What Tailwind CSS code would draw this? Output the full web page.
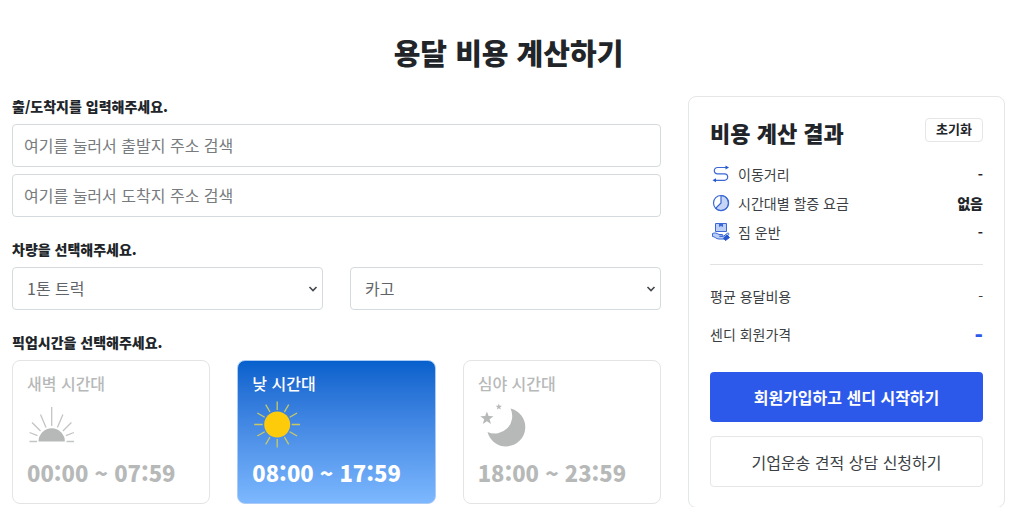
<!DOCTYPE html>
<html lang="ko">
  <head>
    <meta charset="utf-8" />
    <meta name="viewport" content="width=device-width, initial-scale=1" />
    <title>용달 비용 계산하기</title>
    <script src="https://cdn.jsdelivr.net/npm/@tailwindcss/browser@4"></script>
  </head>
  <body class="overflow-x-hidden bg-white font-['Noto_Sans_CJK_KR',sans-serif] text-[#212529]">
    <main class="pt-[30px] pr-[19px] pl-3">
      <h1 class="mb-[22px] text-center text-[29px] leading-[44px] font-black">용달 비용 계산하기</h1>

      <div class="grid items-start gap-[27px] md:grid-cols-[minmax(0,1fr)_317px]">
        <!-- Calculator form -->
        <form id="calculator">
          <fieldset>
            <legend class="mb-2 text-[14px] leading-5 font-black">출/도착지를 입력해주세요.</legend>
            <div class="flex flex-col gap-[7px]">
              <input type="text" aria-label="출발지" placeholder="여기를 눌러서 출발지 주소 검색" class="h-[43px] w-full rounded border border-[#d5dade] px-[11px] pb-[2px] text-base placeholder:text-[#777b7e]" />
              <input type="text" aria-label="도착지" placeholder="여기를 눌러서 도착지 주소 검색" class="h-[43px] w-full rounded border border-[#d5dade] px-[11px] pb-[2px] text-base placeholder:text-[#777b7e]" />
            </div>
          </fieldset>

          <fieldset class="mt-[22px]">
            <legend class="mb-2 text-[14px] leading-5 font-black">차량을 선택해주세요.</legend>
            <div class="grid grid-cols-2 gap-[27px]">
              <div class="relative">
                <select aria-label="차량 크기" class="h-[43px] w-full appearance-none rounded border border-[#d5dade] bg-white px-[14px] pb-[2px] text-base text-[#5f6468]">
                  <option>1톤 트럭</option>
                </select>
                <svg class="pointer-events-none absolute top-[17px] right-[5px] size-[10px]" viewBox="0 0 10 10" fill="none" stroke="#44484c" stroke-width="1.6"><path d="M1.5 3 5 6.5 8.5 3" /></svg>
              </div>
              <div class="relative">
                <select aria-label="차량 종류" class="h-[43px] w-full appearance-none rounded border border-[#d5dade] bg-white px-[14px] pb-[2px] text-base text-[#5f6468]">
                  <option>카고</option>
                </select>
                <svg class="pointer-events-none absolute top-[17px] right-[5px] size-[10px]" viewBox="0 0 10 10" fill="none" stroke="#44484c" stroke-width="1.6"><path d="M1.5 3 5 6.5 8.5 3" /></svg>
              </div>
            </div>
          </fieldset>

          <fieldset class="mt-[22px]">
            <legend class="mb-2 text-[14px] leading-5 font-black">픽업시간을 선택해주세요.</legend>
            <div class="grid grid-cols-3 gap-[27px]">
              <label class="relative block h-36 cursor-pointer rounded-lg border border-[#e4e4e4] px-[14px] pt-[10px] text-[#b7b9b9]">
                <input type="radio" name="pickup" class="sr-only" />
                <span class="block text-base leading-6 font-medium">새벽 시간대</span>
                <svg class="mt-[5px] size-12" viewBox="0 0 48 48" fill="#b7b9b9" stroke="#c3c5c5" stroke-width="1.3">
                  <path d="M11.5 41.5a13.2 13.2 0 0 1 26.4 0z" stroke="none" />
                  <path d="M24.7 7v19M13.5 14.5l5.5 13M35.9 14.5l-5.5 13M5 22.5l8.5 8.5M44.4 22.5l-8.5 8.5M2.5 32.5l8 3.2M46.9 32.5l-8 3.2M2.5 41.5h7.5M39.5 41.5h7.5" />
                </svg>
                <span class="mt-2 block text-[22px] leading-8 font-black">00:00 ~ 07:59</span>
              </label>
              <label class="relative block h-36 cursor-pointer rounded-lg border border-[#a9cbf5] bg-linear-to-b from-[#0560cc] to-[#7db8ff] px-[14px] pt-[10px] text-white">
                <input type="radio" name="pickup" class="sr-only" checked />
                <span class="block text-base leading-6 font-medium">낮 시간대</span>
                <svg class="mt-[5px] size-12" viewBox="0 0 48 48" fill="#fecb0a" stroke="#c9c963" stroke-width="1.3">
                  <circle cx="25.2" cy="24.5" r="13" stroke="none" />
                  <path d="M25.2 1.5v8.5M25.2 39v8.5M2.2 24.5h8.5M39.7 24.5h8.5M13.7 4.6l4.3 7.4M36.7 4.6l-4.3 7.4M13.7 44.4l4.3-7.4M36.7 44.4l-4.3-7.4M5.3 13l7.4 4.3M45.1 13l-7.4 4.3M5.3 36l7.4-4.3M45.1 36l-7.4-4.3" />
                </svg>
                <span class="mt-2 block text-[22px] leading-8 font-black">08:00 ~ 17:59</span>
              </label>
              <label class="relative block h-36 cursor-pointer rounded-lg border border-[#e4e4e4] px-[14px] pt-[10px] text-[#b7b9b9]">
                <input type="radio" name="pickup" class="sr-only" />
                <span class="block text-base leading-6 font-medium">심야 시간대</span>
                <svg class="mt-[5px] size-12" viewBox="0 0 48 48" fill="#b7b9b9">
                  <path d="M32.5 8.5A19.2 19.2 0 1 1 9.5 32 17.5 17.5 0 0 0 32.5 8.500z" />
                  <path d="m8.9 11.5 1.700 4.500 4.900.2-3.900 3 1.400 4.700-4.100-2.700-4.100 2.700 1.400-4.700-3.900-3 4.900-.2zM20.800 3.500l.8 2.200 2.400.1-1.900 1.500.7 2.300-2-1.300-2 1.300.7-2.300-1.900-1.500 2.400-.1z" />
                </svg>
                <span class="mt-2 block text-[22px] leading-8 font-black">18:00 ~ 23:59</span>
              </label>
            </div>
          </fieldset>
        </form>

        <!-- Result panel -->
        <section class="rounded-lg border border-[#e5e6e7] px-[21px] pt-[21px] pb-5">
          <div class="flex items-start justify-between">
            <h2 class="text-[22px] leading-7 font-black">비용 계산 결과</h2>
            <button type="reset" form="calculator" class="h-6 rounded border border-[#e5e6e7] px-[10px] pb-[2px] text-[13px] leading-5 font-bold">초기화</button>
          </div>

          <dl class="mt-[14px] flex flex-col gap-px text-[14px] leading-[28px] text-[#3b3f43]">
            <div class="flex items-center">
              <dt class="flex grow items-center gap-2">
                <svg class="ml-[2px] size-[18px]" viewBox="0 0 18 18" fill="none" stroke="#3b68d4" stroke-width="1.2">
                  <path d="M14 2.5H5.5a3.2 3.2 0 0 0 0 6.4h7a3.2 3.2 0 0 1 0 6.400H3" />
                  <path d="M13.5.5 17 2.500l-3.500 2zM4 13.300.5 15.300l3.500 2z" fill="#2457cf" stroke="none" />
                </svg>
                이동거리
              </dt>
              <dd class="font-bold text-[#212529]">-</dd>
            </div>
            <div class="flex items-center">
              <dt class="flex grow items-center gap-2">
                <svg class="ml-[2px] size-[18px]" viewBox="0 0 18 18" fill="none" stroke="#3b68d4" stroke-width="1.2">
                  <path d="M9 1.500a7.500 7.500 0 1 1-5.300 12.800L9 9z" fill="#c6d5f5" />
                  <circle cx="9" cy="9" r="7.500" />
                </svg>
                시간대별 할증 요금
              </dt>
              <dd class="font-black text-[#212529]">없음</dd>
            </div>
            <div class="flex items-center">
              <dt class="flex grow items-center gap-2">
                <svg class="ml-[2px] size-[18px]" viewBox="0 0 18 18" fill="#bccff5" stroke="#3b68d4">
                  <path d="M3.500.5h11v8h-11z" />
                  <path d="M7 .5h4V4L9 3 7 4z" fill="#3b68d4" stroke="none" />
                  <path d="M.5 10.500c2.500-1 4-.5 6.500 1h3c1.300 0 1.300 1.800 0 1.800H7.500h4l3.500-2.800c1.500-1 2.500.2 1.500 1.300L12.500 16H7C4 16 3 13.500.5 13.500z" />
                  <path d="m11.500 15 3.500-3 2.500 2.500-4 3z" fill="#2457cf" stroke="#2457cf" />
                </svg>
                짐 운반
              </dt>
              <dd class="font-bold text-[#212529]">-</dd>
            </div>
          </dl>

          <hr class="mt-[18px] mb-[17px] border-[#e0e2e3]" />

          <dl class="flex flex-col gap-[10px] text-[14px] leading-[28px] text-[#3b3f43]">
            <div class="flex items-center justify-between">
              <dt>평균 용달비용</dt>
              <dd>-</dd>
            </div>
            <div class="flex items-center justify-between">
              <dt>센디 회원가격</dt>
              <dd class="text-[22px] font-black text-[#2d59eb]">-</dd>
            </div>
          </dl>

          <div class="mt-6 flex flex-col gap-[14px]">
            <button type="button" class="h-[50px] w-full rounded bg-[#2d59eb] text-base font-bold text-white">회원가입하고 센디 시작하기</button>
            <button type="button" class="h-[51px] w-full rounded border border-[#e5e6e7] text-base text-[#3b3f43]">기업운송 견적 상담 신청하기</button>
          </div>
        </section>
      </div>
    </main>
  </body>
</html>
